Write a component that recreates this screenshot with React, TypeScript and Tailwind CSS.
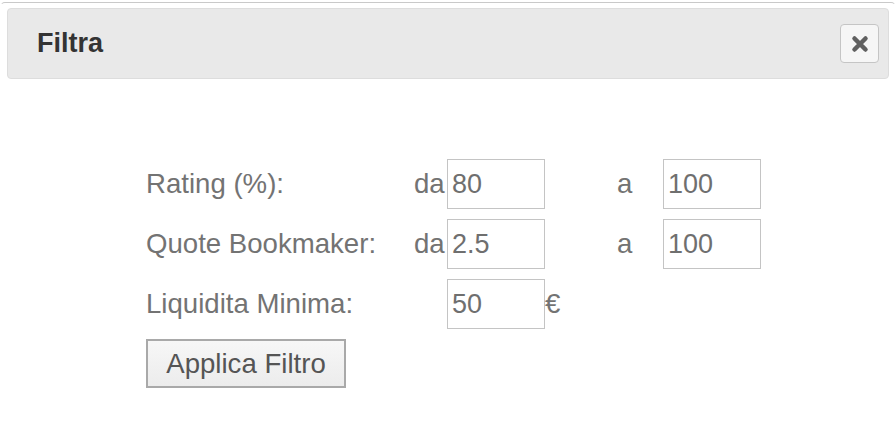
export default function App() {
  const font = { fontFamily: '"Liberation Sans", Arial, sans-serif' };
  return (
    <div className="h-[424px] overflow-hidden bg-white pt-[2px]" style={font}>
      <div className="h-[440px] rounded-t-[5px] border-t border-x border-t-[#c9c9c9] border-x-transparent px-[6px] pt-[5px]">
        <header className="flex h-[71px] items-center justify-between rounded-[4px] border border-[#dddddd] bg-[#e9e9e9] pl-[29px] pr-[9px] text-[#333333]">
          <span className="text-[27px] font-bold">Filtra</span>
          <button className="flex h-[39px] w-[39px] items-center justify-center rounded-[4px] border border-[#c5c5c5] bg-[#f6f6f6]">
            <svg width="18" height="18" viewBox="0 0 18 18">
              <path d="M3.5 3.5 L14.5 14.5 M14.5 3.5 L3.5 14.5" stroke="#606060" strokeWidth="4.5" strokeLinecap="round" />
            </svg>
          </button>
        </header>

        <section className="mt-[80px] pl-[139px] text-[27.6px] text-[#737373]">
          <div className="flex h-[50px] items-center">
            <span className="w-[268px]">Rating (%):</span>
            <span className="w-[33px]">da</span>
            <Field value="80" />
            <span className="ml-[72px] w-[46px]">a</span>
            <Field value="100" />
          </div>
          <div className="mt-[10px] flex h-[50px] items-center">
            <span className="w-[268px]">Quote Bookmaker:</span>
            <span className="w-[33px]">da</span>
            <Field value="2.5" />
            <span className="ml-[72px] w-[46px]">a</span>
            <Field value="100" />
          </div>
          <div className="mt-[10px] flex h-[50px] items-center">
            <span className="w-[301px]">Liquidita Minima:</span>
            <Field value="50" />
            <span>€</span>
          </div>
          <button className="mt-[10px] h-[49px] w-[200px] border-2 border-[#a9a9a9] bg-gradient-to-b from-[#f7f7f7] to-[#ececec] text-[27.6px] text-[#555555]">
            Applica Filtro
          </button>
        </section>
      </div>
    </div>
  );
}

function Field({ value }: { value: string }) {
  return (
    <input
      defaultValue={value}
      className="h-[50px] w-[98px] border border-[#c4c4c4] bg-white px-[4px] text-[27px] text-[#6f6f6f] outline-none"
    />
  );
}
